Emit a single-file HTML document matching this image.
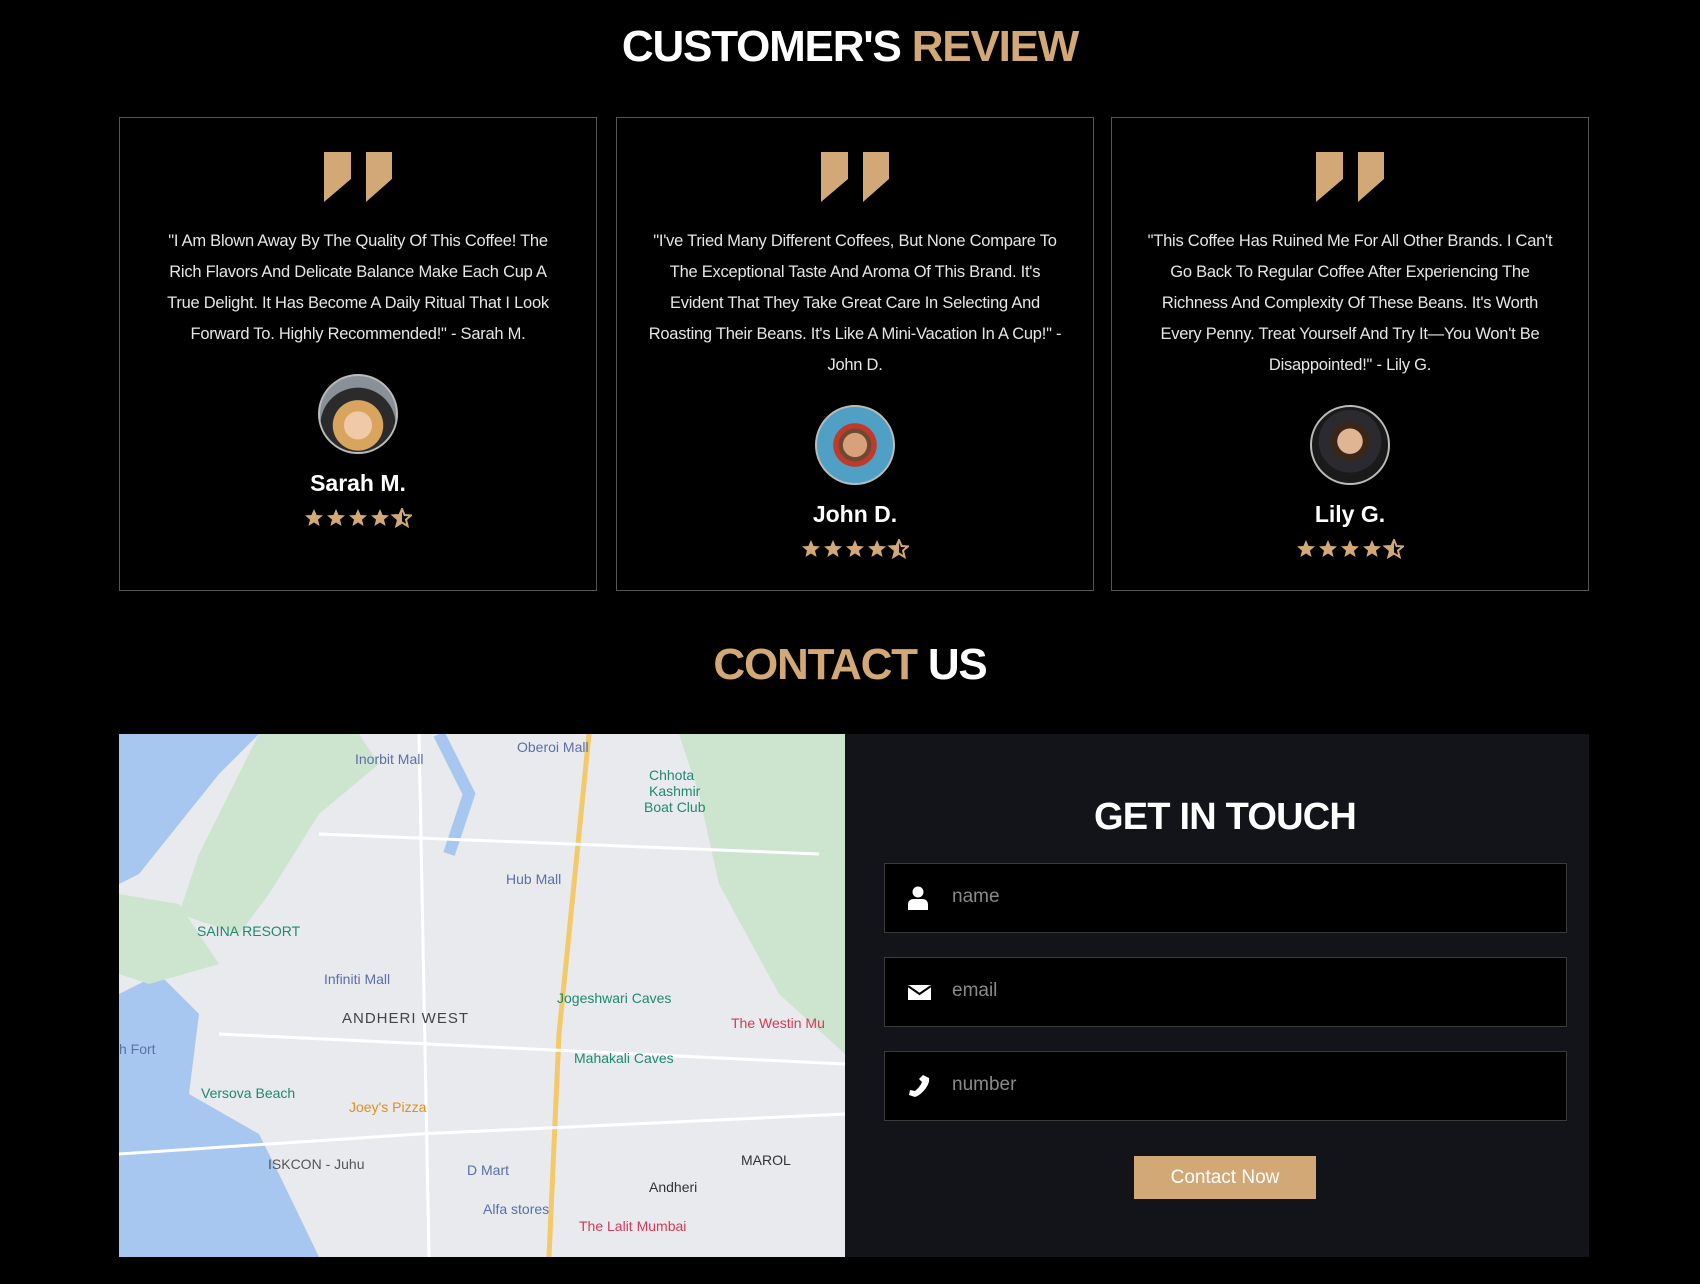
<!DOCTYPE html>
<html><head><meta charset="utf-8"><style>
*{margin:0;padding:0;box-sizing:border-box}
body{width:1700px;height:1284px;background:#000;font-family:"Liberation Sans",sans-serif;color:#fff;position:relative;overflow:hidden}
.h{position:absolute;left:0;width:1700px;text-align:center;font-weight:bold;font-size:44px;letter-spacing:-1.2px}
.g{color:#d2a877}
.card{position:absolute;top:117px;width:478px;height:474px;border:1px solid #555;text-align:center}
.q{position:absolute;top:34px;left:50%;margin-left:-34px;width:68px;height:50px}
.t{position:absolute;top:108px;left:30px;right:30px;font-size:16.5px;line-height:31px;color:#e6e6e6;letter-spacing:-0.25px}
.av{position:absolute;left:50%;margin-left:-40px;width:80px;height:80px;border-radius:50%;border:2px solid #bbb;overflow:hidden}
.nm{position:absolute;left:0;right:0;font-weight:bold;font-size:23px}
.st{position:absolute;left:50%;margin-left:-54px;width:108px;height:20px}
.map{position:absolute;left:119px;top:734px;width:726px;height:523px;background:#e8eaed;overflow:hidden}
.form{position:absolute;left:845px;top:734px;width:744px;height:523px;background:#131419}
.in{position:absolute;left:39px;width:683px;height:70px;background:#000;border:1px solid #3a3a3a}
.in span{position:absolute;left:67px;top:22px;font-size:19px;color:#8a8a8a}
.in svg{position:absolute;left:22px;top:22px}
.btn{position:absolute;left:289px;top:422px;width:182px;height:43px;background:#d2a877;color:#fff;font-size:19px;text-align:center;line-height:43px}
</style></head><body>
<svg width="0" height="0" style="position:absolute"><defs>
<path id="s" d="M10 1 12.6 7 19 7.4 14 11.6 15.6 18 10 14.5 4.4 18 6 11.6 1 7.4 7.4 7Z"/>
<g id="stars" fill="#d2a877"><use href="#s"/><use href="#s" x="22"/><use href="#s" x="44"/><use href="#s" x="66"/><path transform="translate(88 0)" d="M10 1 12.6 7 19 7.4 14 11.6 15.6 18 10 14.5 4.4 18 6 11.6 1 7.4 7.4 7Z" fill="none" stroke="#d2a877" stroke-width="2"/><path transform="translate(88 0)" d="M10 1V14.5L4.4 18 6 11.6 1 7.4 7.4 7Z"/></g>
</defs></svg>
<div class="h" style="top:22px">CUSTOMER'S <span class="g">REVIEW</span></div>

<div class="card" style="left:119px">
<svg class="q" viewBox="0 0 68 50"><path d="M0 0H27V27L0 50Z M42 0H68V27L42 50Z" fill="#d2a877"/></svg>
<div class="t" style="left:36px;right:36px">"I Am Blown Away By The Quality Of This Coffee! The Rich Flavors And Delicate Balance Make Each Cup A True Delight. It Has Become A Daily Ritual That I Look Forward To. Highly Recommended!" - Sarah M.</div>
<div class="av" style="top:256px;background:radial-gradient(circle at 50% 65%,#f0c9a8 0 22%,#d9a55e 23% 40%,#2b2b2b 41% 60%,#8a9098 61%)"></div>
<div class="nm" style="top:352px">Sarah M.</div>
<svg class="st" style="top:390px" viewBox="0 0 108 20"><use href="#stars"/></svg>
</div>

<div class="card" style="left:616px">
<svg class="q" viewBox="0 0 68 50"><path d="M0 0H27V27L0 50Z M42 0H68V27L42 50Z" fill="#d2a877"/></svg>
<div class="t">"I've Tried Many Different Coffees, But None Compare To The Exceptional Taste And Aroma Of This Brand. It's Evident That They Take Great Care In Selecting And Roasting Their Beans. It's Like A Mini-Vacation In A Cup!" - John D.</div>
<div class="av" style="top:287px;background:radial-gradient(circle at 50% 50%,#d9a07c 0 22%,#6b4a30 23% 30%,#c0392b 31% 40%,#4fa0c4 41%)"></div>
<div class="nm" style="top:383px">John D.</div>
<svg class="st" style="top:421px" viewBox="0 0 108 20"><use href="#stars"/></svg>
</div>

<div class="card" style="left:1111px">
<svg class="q" viewBox="0 0 68 50"><path d="M0 0H27V27L0 50Z M42 0H68V27L42 50Z" fill="#d2a877"/></svg>
<div class="t">"This Coffee Has Ruined Me For All Other Brands. I Can't Go Back To Regular Coffee After Experiencing The Richness And Complexity Of These Beans. It's Worth Every Penny. Treat Yourself And Try It—You Won't Be Disappointed!" - Lily G.</div>
<div class="av" style="top:287px;background:radial-gradient(circle at 50% 45%,#e0b593 0 22%,#3a2618 23% 34%,#2a2a30 35% 55%,#1a1a1a 56%)"></div>
<div class="nm" style="top:383px">Lily G.</div>
<svg class="st" style="top:421px" viewBox="0 0 108 20"><use href="#stars"/></svg>
</div>

<div class="h" style="top:640px"><span class="g">CONTACT</span> US</div>

<div class="map">
<svg width="726" height="523" viewBox="0 0 726 523">
<rect width="726" height="523" fill="#e8eaed"/>
<path d="M0 0H140L100 40 60 90 20 140 0 150Z" fill="#a8c7f0"/>
<path d="M0 260 40 240 80 280 70 360 140 400 160 440 200 523H0Z" fill="#a8c7f0"/>
<path d="M140 0 240 0 260 30 200 80 150 160 120 200 60 180 80 120Z" fill="#cde4cf"/>
<path d="M560 0H726V320L660 260 600 150 580 60Z" fill="#cde4cf"/>
<path d="M0 160 60 170 100 230 30 250 0 240Z" fill="#cde4cf"/>
<path d="M320 0 350 60 330 120" stroke="#a8c7f0" stroke-width="12" fill="none"/>
<path d="M470 0 455 150 440 300 430 523" stroke="#f3c96a" stroke-width="5" fill="none"/>
<path d="M0 420 300 400 726 380 M100 300 726 330 M300 0 310 523 M200 100 700 120" stroke="#fff" stroke-width="3" fill="none"/>
<g font-family="Liberation Sans" font-size="14" fill="#5b6fa8">
<text x="236" y="30">Inorbit Mall</text><text x="398" y="18">Oberoi Mall</text><text x="387" y="150">Hub Mall</text>
<text x="205" y="250">Infiniti Mall</text><text x="438" y="269" fill="#1e8a6e">Jogeshwari Caves</text>
<text x="455" y="329" fill="#1e8a6e">Mahakali Caves</text><text x="82" y="364" fill="#1e8a6e">Versova Beach</text>
<text x="530" y="46" fill="#1e8a6e">Chhota</text><text x="530" y="62" fill="#1e8a6e">Kashmir</text><text x="525" y="78" fill="#1e8a6e">Boat Club</text>
<text x="78" y="202" fill="#1e8a6e">SAINA RESORT</text><text x="612" y="294" fill="#d23a5a">The Westin Mu</text>
<text x="230" y="378" fill="#e09020">Joey's Pizza</text><text x="348" y="441">D Mart</text><text x="364" y="480">Alfa stores</text>
<text x="460" y="497" fill="#d23a5a">The Lalit Mumbai</text><text x="149" y="435" fill="#555">ISKCON - Juhu</text>
<text x="530" y="458" fill="#333">Andheri</text><text x="622" y="431" fill="#333">MAROL</text>
<text x="0" y="320">h Fort</text>
</g>
<text x="223" y="289" font-family="Liberation Sans" font-size="15" fill="#444" letter-spacing="1">ANDHERI WEST</text>
</svg>
</div>

<div class="form">
<div style="position:absolute;left:0;right:0;top:62px;text-align:center;font-weight:bold;font-size:38px;letter-spacing:-0.8px;padding-left:16px">GET IN TOUCH</div>
<div class="in" style="top:129px"><svg width="22" height="24" viewBox="0 0 22 24"><circle cx="11" cy="6" r="5.5" fill="#fff"/><path d="M1 24V19Q1 13 7 13H15Q21 13 21 19V24Z" fill="#fff"/></svg><span>name</span></div>
<div class="in" style="top:223px"><svg width="25" height="24" viewBox="0 0 25 24"><path d="M1 5H24V20H1Z" fill="#fff"/><path d="M1 6 12.5 14 24 6" stroke="#000" stroke-width="2" fill="none"/></svg><span>email</span></div>
<div class="in" style="top:317px"><svg width="24" height="24" viewBox="0 0 24 24"><path d="M16 1 22 4Q23 8 19 14 14 21 8 23L2 21 3 16 8 17Q13 13 15 8L12 5Z" fill="#fff"/></svg><span>number</span></div>
<div class="btn">Contact Now</div>
</div>
</body></html>
